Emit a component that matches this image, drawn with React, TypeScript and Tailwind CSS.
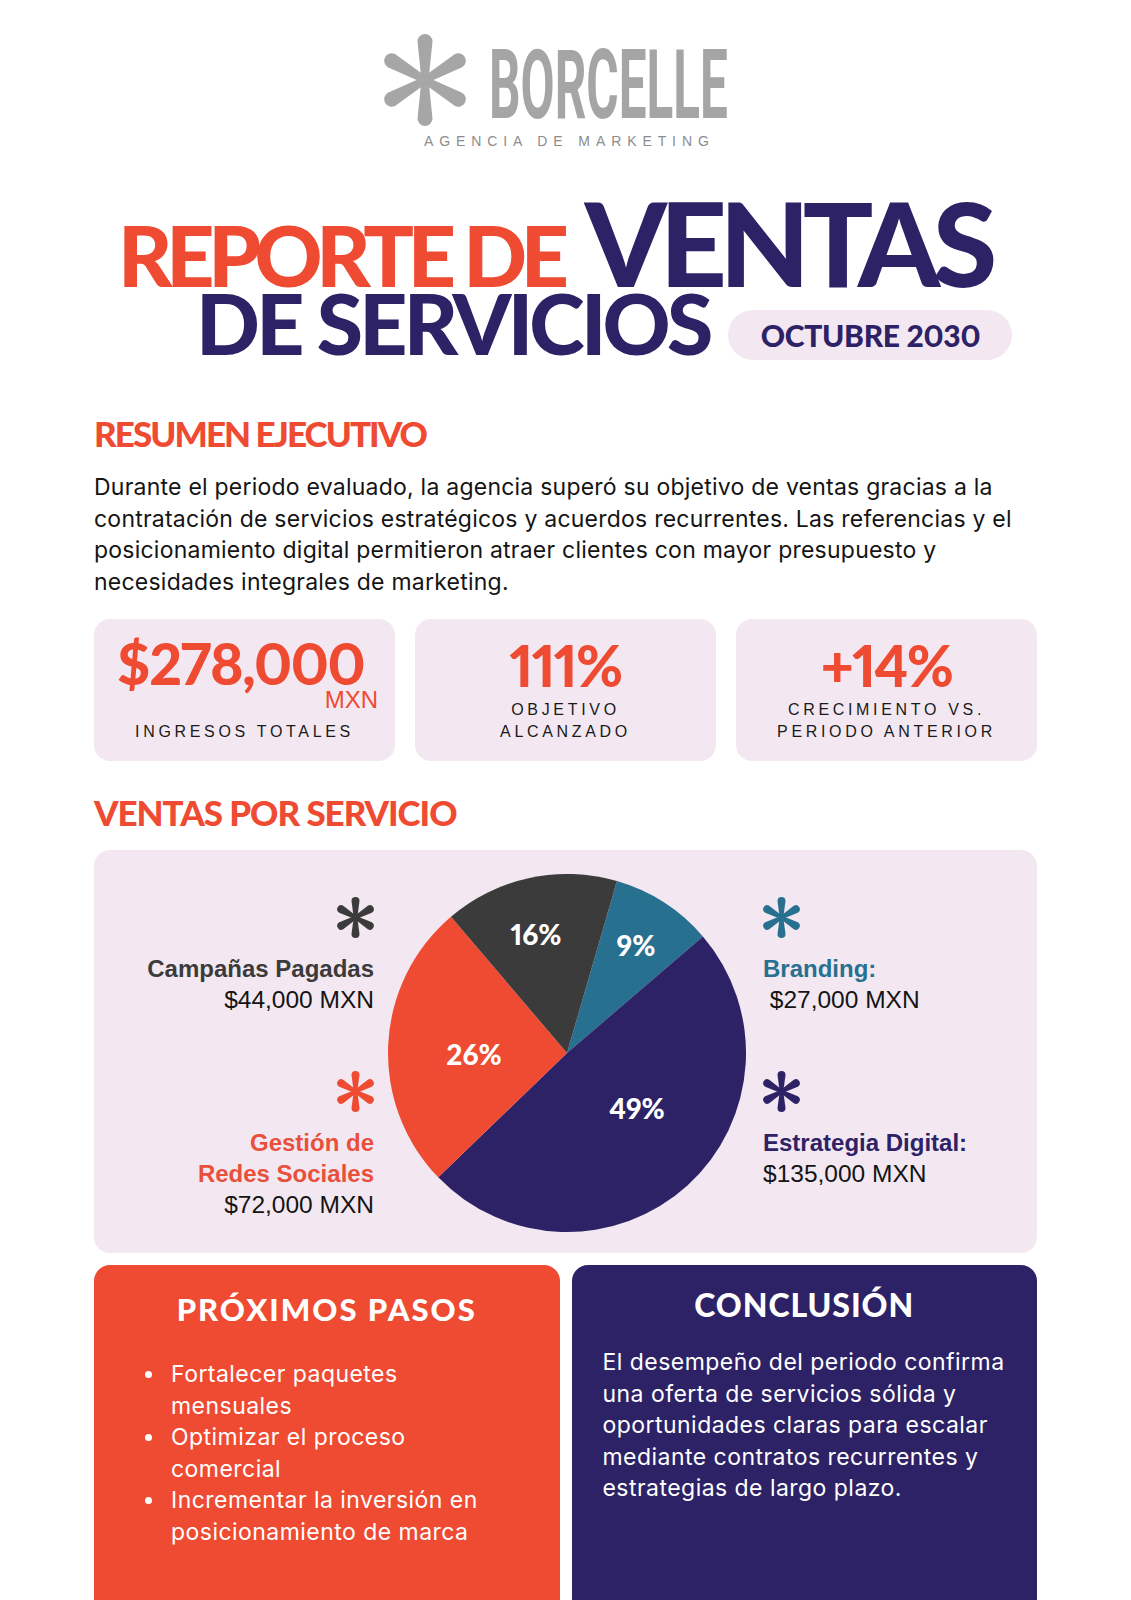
import React from "react";

const ORANGE = "#ef4a32";
const NAVY = "#2e2266";
const BLUE = "#27708f";
const DARK = "#3b3b3b";

function Asterisk({
  color,
  d = 16.5,
  r = 4,
  b = 1.8,
  w = 37,
  h = 41,
}: {
  color: string;
  d?: number;
  r?: number;
  b?: number;
  w?: number;
  h?: number;
}) {
  const arm = `M ${-b} 0 L ${-r} ${-d} A ${r} ${r} 0 0 1 ${r} ${-d} L ${b} 0 Z`;
  return (
    <svg width={w} height={h} viewBox={`${-w / 2} ${-h / 2} ${w} ${h}`} className="block">
      {[0, 60, 120, 180, 240, 300].map((a) => (
        <path key={a} d={arm} transform={`rotate(${a})`} fill={color} />
      ))}
      <circle r={b + 1.2} fill={color} />
    </svg>
  );
}

function Pie() {
  const size = 358;
  const c = size / 2;
  const R = 179;
  const pt = (deg: number) => {
    const a = (deg * Math.PI) / 180;
    return [c + R * Math.sin(a), c - R * Math.cos(a)];
  };
  const slices: [number, number, string][] = [
    [16.2, 49.4, BLUE],
    [49.4, 226, NAVY],
    [226, 319.6, ORANGE],
    [319.6, 376.2, DARK],
  ];
  const labels: [string, number, number][] = [
    ["16%", 148, 60],
    ["9%", 248, 71],
    ["26%", 86, 180],
    ["49%", 249, 234],
  ];
  return (
    <svg width={size} height={size} viewBox={`0 0 ${size} ${size}`} className="block">
      {slices.map(([s, e, col]) => {
        const [x1, y1] = pt(s);
        const [x2, y2] = pt(e);
        const large = e - s > 180 ? 1 : 0;
        return (
          <path
            key={s}
            d={`M ${c} ${c} L ${x1} ${y1} A ${R} ${R} 0 ${large} 1 ${x2} ${y2} Z`}
            fill={col}
          />
        );
      })}
      {labels.map(([t, x, y]) => (
        <text
          key={t}
          x={x}
          y={y}
          textAnchor="middle"
          dominantBaseline="central"
          fill="#ffffff"
          style={{ fontFamily: "Lato, sans-serif", fontWeight: 900, fontSize: 28, fontVariantNumeric: "proportional-nums" }}
        >
          {t}
        </text>
      ))}
    </svg>
  );
}

export default function App() {
  return (
    <div className="relative h-[1600px] w-[1131px] overflow-hidden bg-white font-['Liberation_Sans',Arial,sans-serif] text-[#141414]">
      {/* Logo */}
      <div className="pl-[379px] pt-[34px]">
        <div className="flex items-start">
          <Asterisk color="#a6a6a6" d={38.5} r={7.5} b={3.5} w={92} h={92} />
          <div className="ml-[18px] mt-[11px] h-[80px] w-[238px]">
            <span className="inline-block origin-left scale-x-[0.51] whitespace-nowrap font-['Roboto',sans-serif] text-[97px] font-bold leading-[80px] text-[#a5a5a5]">
              BORCELLE
            </span>
          </div>
        </div>
        <div className="ml-[45px] mt-[8px] whitespace-nowrap text-[14px] leading-none tracking-[5.9px] text-[#8d8d8d]">
          AGENCIA DE MARKETING
        </div>
      </div>

      {/* Title */}
      <div className="mt-[49px] flex h-[90px] items-baseline pl-[118px] font-['Lato',sans-serif] font-black">
        <span className="whitespace-nowrap text-[84px] leading-[64px] tracking-[-0.075em] text-[#ef4a32]">
          REPORTE DE
        </span>
        <span className="ml-[22px] whitespace-nowrap text-[117px] leading-[90px] tracking-[-0.062em] text-[#2e2266]">
          VENTAS
        </span>
      </div>
      <div className="mt-[4px] flex items-start pl-[196px] font-['Lato',sans-serif] font-black">
        <span className="whitespace-nowrap text-[84px] leading-[64px] tracking-[-0.045em] text-[#2e2266]">
          DE SERVICIOS
        </span>
        <div className="ml-[19px] mt-[19px] flex h-[50px] w-[284px] items-center justify-center rounded-full bg-[#f3e8f1]">
          <span className="whitespace-nowrap text-[30px] leading-none tracking-[-0.01em] text-[#2e2266] proportional-nums">
            OCTUBRE 2030
          </span>
        </div>
      </div>

      {/* Resumen */}
      <div className="px-[94px]">
        <h2 className="mt-[56px] font-['Lato',sans-serif] text-[35px] font-black leading-none tracking-[-0.055em] text-[#ef4a32]">
          RESUMEN EJECUTIVO
        </h2>
        <p className="mt-[21px] font-['Inter',sans-serif] text-[23px] leading-[31.5px] tracking-[0.01em]">
          Durante el periodo evaluado, la agencia superó su objetivo de ventas gracias a la contratación de
          servicios estratégicos y acuerdos recurrentes. Las referencias y el posicionamiento digital permitieron
          atraer clientes con mayor presupuesto y necesidades integrales de marketing.
        </p>

        {/* Stat cards */}
        <div className="mt-[21px] grid h-[142px] grid-cols-3 gap-[20px]">
          <div className="flex flex-col items-center rounded-[16px] bg-[#f3e8f1] pt-[20px]">
            <div className="ml-[6px] flex flex-col items-end">
              <span className="mr-[14px] font-['Lato',sans-serif] text-[57px] font-black leading-[48px] tracking-[-0.025em] text-[#ef4a32] proportional-nums">
                $278,000
              </span>
              <span className="mt-[1px] text-[24px] leading-none text-[#ef4a32]">MXN</span>
            </div>
            <div className="mt-[9px] text-[16px] leading-[22px] tracking-[0.23em] text-[#1a1a1a]">
              INGRESOS TOTALES
            </div>
          </div>
          <div className="flex flex-col items-center rounded-[16px] bg-[#f3e8f1] pt-[22px]">
            <span className="font-['Lato',sans-serif] text-[57px] font-black leading-[48px] tracking-[-0.03em] text-[#ef4a32] proportional-nums">
              111%
            </span>
            <div className="mt-[10px] text-center text-[16px] leading-[22px] tracking-[0.23em] text-[#1a1a1a]">
              OBJETIVO
              <br />
              ALCANZADO
            </div>
          </div>
          <div className="flex flex-col items-center rounded-[16px] bg-[#f3e8f1] pt-[22px]">
            <span className="font-['Lato',sans-serif] text-[57px] font-black leading-[48px] tracking-[-0.03em] text-[#ef4a32] proportional-nums">
              +14%
            </span>
            <div className="mt-[10px] text-center text-[16px] leading-[22px] tracking-[0.23em] text-[#1a1a1a]">
              CRECIMIENTO VS.
              <br />
              PERIODO ANTERIOR
            </div>
          </div>
        </div>

        {/* Ventas por servicio */}
        <h2 className="mt-[34px] font-['Lato',sans-serif] text-[35px] font-black leading-none tracking-[-0.03em] text-[#ef4a32]">
          VENTAS POR SERVICIO
        </h2>
        <div className="mt-[20px] flex h-[403px] rounded-[16px] bg-[#f3e8f1]">
          <div className="flex w-[280px] flex-col items-end pt-[47px] text-right text-[24px] leading-[31px]">
            <Asterisk color={DARK} />
            <div className="mt-[15px] font-bold text-[#3b3b3b]">Campañas Pagadas</div>
            <div className="text-[24.5px]">$44,000 MXN</div>
            <div className="mt-[56px]">
              <Asterisk color={ORANGE} />
            </div>
            <div className="mt-[15px] font-bold text-[#e9503b]">
              Gestión de
              <br />
              Redes Sociales
            </div>
            <div className="text-[24.5px]">$72,000 MXN</div>
          </div>
          <div className="ml-[14px] pt-[24px]">
            <Pie />
          </div>
          <div className="ml-[17px] flex flex-col items-start pt-[47px] text-[24px] leading-[31px]">
            <Asterisk color={BLUE} />
            <div className="mt-[15px] font-bold text-[#27708f]">Branding:</div>
            <div className="text-[24.5px]">{"\u00a0$27,000 MXN"}</div>
            <div className="mt-[56px]">
              <Asterisk color={NAVY} />
            </div>
            <div className="mt-[15px] font-bold text-[#2e2266]">Estrategia Digital:</div>
            <div className="text-[24.5px]">$135,000 MXN</div>
          </div>
        </div>

        {/* Bottom cards */}
        <div className="mt-[12px] grid h-[340px] grid-cols-2 gap-[12px]">
          <div className="rounded-t-[16px] bg-[#ef4a32] pt-[29px] text-white">
            <h3 className="text-center font-['Lato',sans-serif] text-[31px] font-black leading-none tracking-[0.065em]">
              PRÓXIMOS PASOS
            </h3>
            <ul className="mt-[34px] flex flex-col font-['Inter',sans-serif] text-[23px] leading-[31.5px] tracking-[0.02em]">
              {[
                "Fortalecer paquetes mensuales",
                "Optimizar el proceso comercial",
                "Incrementar la inversión en posicionamiento de marca",
              ].map((t) => (
                <li key={t} className="flex pl-[51px]">
                  <span className="mt-[12px] h-[7px] w-[7px] shrink-0 rounded-full bg-white" />
                  <span className="ml-[19px] w-[318px]">{t}</span>
                </li>
              ))}
            </ul>
          </div>
          <div className="rounded-t-[16px] bg-[#2e2266] pt-[24px] text-white">
            <h3 className="text-center font-['Lato',sans-serif] text-[32px] font-black leading-none tracking-[0.03em]">
              CONCLUSIÓN
            </h3>
            <p className="ml-[31px] mt-[26px] w-[420px] font-['Inter',sans-serif] text-[23px] leading-[31.5px] tracking-[0.02em]">
              El desempeño del periodo confirma una oferta de servicios sólida y oportunidades claras para escalar
              mediante contratos recurrentes y estrategias de largo plazo.
            </p>
          </div>
        </div>
      </div>
    </div>
  );
}
